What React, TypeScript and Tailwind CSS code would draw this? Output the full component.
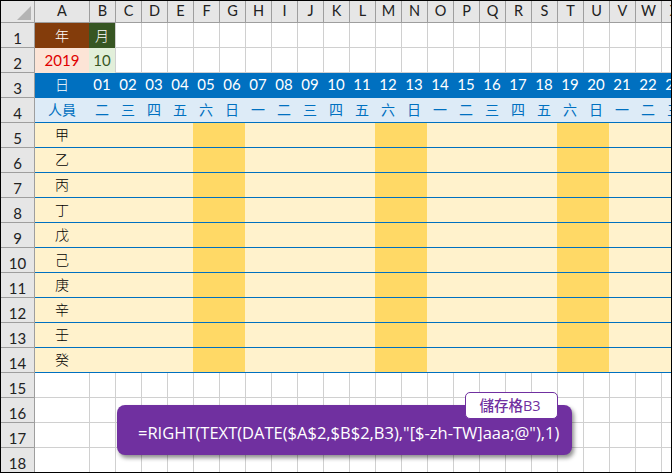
const cols = ['A','B','C','D','E','F','G','H','I','J','K','L','M','N','O','P','Q','R','S','T','U','V','W','X'];
const weekdays = ['二','三','四','五','六','日','一'];
const people = ['甲','乙','丙','丁','戊','己','庚','辛','壬','癸'];
const gridTemplate = '34px 54px repeat(23, 26px)';

// F,G / M,N / T,U are the weekend columns
const weekendIdx = [5, 6, 12, 13, 19, 20];

function RowHead({ n }: { n: number }) {
  return (
    <div className="flex items-end justify-center pb-[1px] bg-[#e6e6e6] border-r border-b border-[#9e9e9e] text-[15px] leading-none text-[#222] h-[25px]">
      {n}
    </div>
  );
}

function Blank({ n }: { n: number }) {
  return (
    <>
      {Array.from({ length: n }).map((_, i) => (
        <div key={i} className="h-[25px] border-l border-b border-[#d0d0d0] bg-white" />
      ))}
    </>
  );
}

export default function App() {
  return (
    <div className="relative w-[672px] h-[473px] overflow-hidden bg-white border border-black font-['Lato','Noto_Sans_CJK_TC',sans-serif]">
      <div className="grid" style={{ gridTemplateColumns: gridTemplate }}>
        {/* column heads */}
        <div className="h-[22px] bg-[#e6e6e6] border-r border-b border-[#9e9e9e] flex items-end justify-end p-[2px] pr-[3px]">
          <div className="w-0 h-0 border-l-[14px] border-l-transparent border-b-[14px] border-b-[#b4b4b4]" />
        </div>
        {cols.map((c, i) => (
          <div key={c} className={`h-[22px] bg-[#e6e6e6] border-b border-[#9e9e9e] flex items-center justify-center text-[14.5px] leading-none text-[#222] ${i > 0 ? 'border-l' : ''}`}>
            {c}
          </div>
        ))}

        {/* row 1 */}
        <RowHead n={1} />
        <div className="h-[25px] pb-[1px] bg-[#833c0b] text-white flex items-center justify-center text-[14px] font-light">年</div>
        <div className="h-[25px] pb-[1px] bg-[#375623] text-white flex items-center justify-center text-[14px] font-light">月</div>
        <Blank n={22} />

        {/* row 2 */}
        <RowHead n={2} />
        <div className="h-[25px] pb-[1px] bg-[#fce4d6] text-[#e00000] flex items-center justify-center text-[15px]">2019</div>
        <div className="h-[25px] pb-[1px] bg-[#e2efda] text-[#375623] flex items-center justify-center text-[15px]">10</div>
        <Blank n={22} />

        {/* row 3 */}
        <RowHead n={3} />
        <div className="h-[25px] pb-[2px] bg-[#0070c0] text-white flex items-center justify-center text-[14px] font-light">日</div>
        {cols.slice(1).map((_, i) => (
          <div key={i} className="h-[25px] pb-[2px] bg-[#0070c0] text-white flex items-center justify-center text-[15px]">
            {String(i + 1).padStart(2, '0')}
          </div>
        ))}

        {/* row 4 */}
        <RowHead n={4} />
        <div className="h-[25px] pb-[1px] bg-[#ddebf7] text-[#0070c0] border-b border-[#0070c0] flex items-center justify-center text-[14px]">人員</div>
        {cols.slice(1).map((_, i) => (
          <div key={i} className="h-[25px] pb-[1px] bg-[#ddebf7] text-[#0070c0] border-b border-[#0070c0] flex items-center justify-center text-[14px]">
            {weekdays[i % 7]}
          </div>
        ))}

        {/* rows 5-14 */}
        {people.map((p, r) => (
          <div key={p} className="contents">
            <RowHead n={r + 5} />
            <div className="h-[25px] pb-[1px] bg-[#fff2cc] text-black border-b border-[#0070c0] flex items-center justify-center text-[14px] font-light">{p}</div>
            {cols.slice(1).map((c, i) => (
              <div key={c} className={`h-[25px] border-b border-[#0070c0] ${weekendIdx.includes(i + 1) ? 'bg-[#ffd966]' : 'bg-[#fff2cc]'}`} />
            ))}
          </div>
        ))}

        {/* rows 15-18 */}
        {[15, 16, 17, 18].map(n => (
          <div key={n} className="contents">
            <RowHead n={n} />
            <div className="h-[25px] border-b border-[#d0d0d0] bg-white" />
            <Blank n={23} />
          </div>
        ))}
      </div>

      {/* callout */}
      <div className="absolute left-[116px] top-[404px] w-[455px] h-[50px] rounded-[8px] bg-[#7030a0] shadow-[2px_3px_4px_rgba(0,0,0,0.45)] flex items-center pl-[21px] pt-[6px] text-white text-[16.5px] font-['Open_Sans',sans-serif]">
        =RIGHT(TEXT(DATE($A$2,$B$2,B3),"[$-zh-TW]aaa;@"),1)
      </div>
      <div className="absolute left-[464px] top-[391px] w-[93px] h-[27px] rounded-[5px] bg-white border border-[#7030a0] flex items-center justify-center pr-[3px] text-[#7030a0] text-[14.5px] font-medium font-['Open_Sans','Noto_Sans_CJK_TC',sans-serif]">
        儲存格B3
      </div>
    </div>
  );
}
